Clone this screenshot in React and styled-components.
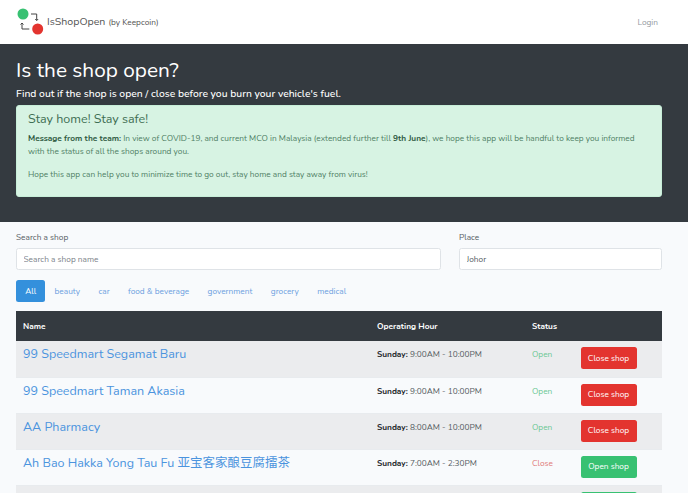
import React from 'react';
import styled, { createGlobalStyle } from 'styled-components';

const Global = createGlobalStyle`
  html, body { margin: 0; padding: 0; height: 493px; overflow: hidden; }
  body {
    background: #f8fafc;
    font-family: "Nunito", "Lato", "Noto Sans CJK SC", sans-serif;
    color: #212529;
  }
  * { box-sizing: border-box; }
`;

const Nav = styled.nav`
  height: 44px;
  background: #fff;
  display: flex;
  align-items: center;
  justify-content: space-between;
  padding: 0 30px 0 17px;
`;
const Brand = styled.div`
  display: flex;
  align-items: center;
  gap: 2px;
`;
const BrandText = styled.span`
  display: flex;
  align-items: baseline;
  gap: 3px;
  padding-bottom: 2px;
  color: #555;
  font-size: 10.6px;
  & small { font-size: 8.3px; }
`;
const Login = styled.a`
  font-size: 8.3px;
  color: #949aa1;
`;
const Hero = styled.header`
  background: #343a40;
  height: 178px;
  padding: 13px 26px 0 16px;
  color: #fff;
`;
const Title = styled.h1`
  margin: 0;
  font-size: 20.8px;
  font-weight: 400;
  line-height: 26px;
`;
const Lead = styled.p`
  margin: 3px 0 3px;
  font-size: 10.35px;
  font-weight: 500;
  line-height: 16px;
`;
const Alert = styled.div`
  background: #d7f3e3;
  border: 1px solid #c7eed8;
  border-radius: 3px;
  height: 92px;
  padding: 5px 11px;
  color: #4f7f65;
  font-size: 8.3px;
  & h4 { margin: 0 0 5px; font-size: 12.5px; font-weight: 400; line-height: 16px; color: #3f6f54; }
  & p { margin: 0 0 9px; line-height: 13.4px; }
  & b { color: #2f5a42; }
`;
const Main = styled.main`
  padding: 10px 26px 0 16px;
`;
const Filters = styled.div`
  display: grid;
  grid-template-columns: 425px 203px;
  column-gap: 18px;
`;
const Field = styled.label`
  display: flex;
  flex-direction: column;
  gap: 5px;
  font-size: 8.3px;
  line-height: 11px;
  color: #555c63;
`;
const Input = styled.input`
  height: 22px;
  border: 1px solid #dfe3e7;
  border-radius: 2.5px;
  padding: 0 6.5px;
  font: inherit;
  font-size: 8.3px;
  color: #555c63;
  background: #fff;
  outline: none;
  &::placeholder { color: #7b8189; opacity: 1; }
`;
const Pills = styled.div`
  display: flex;
  margin-top: 10px;
  margin-bottom: 9px;
`;
const Pill = styled.a`
  height: 22px;
  display: flex;
  align-items: center;
  padding: 0 9.2px;
  font-size: 8.3px;
  border-radius: 2.5px;
  color: ${({ $active }) => ($active ? '#fff' : '#6c9fe0')};
  background: ${({ $active }) => ($active ? '#3490dc' : 'transparent')};
`;
const Table = styled.table`
  width: 646px;
  border-collapse: collapse;
  table-layout: fixed;
  font-size: 8.3px;
`;
const Head = styled.th`
  background: #343a40;
  color: #fff;
  height: 30px;
  padding: 0 7px;
  text-align: left;
  font-weight: 700;
  width: ${({ $w }) => $w}px;
`;
const Row = styled.tr`
  height: 36px;
  background: ${({ $odd }) => ($odd ? '#ebecee' : '#f8fafc')};
  border-bottom: 1px solid #e8ebee;
`;
const Cell = styled.td`
  padding: 7px 7px 0;
  vertical-align: top;
  line-height: 13px;
  color: #555c63;
  & b { color: #212529; }
`;
const NameCell = styled(Cell)`
  padding-top: 5px;
`;
const ShopLink = styled.a`
  font-size: 12.5px;
  line-height: 15px;
  color: #4b94de;
`;
const Status = styled.span`
  color: ${({ $open }) => ($open ? '#6cc894' : '#e07a7a')};
`;
const Action = styled.button`
  height: 22px;
  width: 56px;
  border: none;
  border-radius: 2.5px;
  margin-top: -1px;
  display: block;
  font: inherit;
  font-size: 8.3px;
  color: #fff;
  background: ${({ $open }) => ($open ? '#e3342f' : '#38c172')};
`;

function Logo() {
  return (
    <svg width="28" height="28" viewBox="0 0 28 28" fill="none">
      <circle cx="6" cy="6" r="5.5" fill="#38c172" />
      <circle cx="20.7" cy="21" r="5.5" fill="#e3342f" />
      <path d="M14 6h5.7v6.500M18.200 11L19.700 12.500L21.200 11M12.300 21H5v-6M3.500 16.500L5 15l1.500 1.500" stroke="#444" strokeWidth="1" />
    </svg>
  );
}

const shops = [
  { name: '99 Speedmart Segamat Baru', hours: '9:00AM - 10:00PM', open: true },
  { name: '99 Speedmart Taman Akasia', hours: '9:00AM - 10:00PM', open: true },
  { name: 'AA Pharmacy', hours: '8:00AM - 10:00PM', open: true },
  { name: 'Ah Bao Hakka Yong Tau Fu 亚宝客家酿豆腐擂茶', hours: '7:00AM - 2:30PM', open: false },
];
const tags = ['All', 'beauty', 'car', 'food & beverage', 'government', 'grocery', 'medical'];

export default function App() {
  return (
    <>
      <Global />
      <Nav>
        <Brand>
          <Logo />
          <BrandText>IsShopOpen<small>(by Keepcoin)</small></BrandText>
        </Brand>
        <Login>Login</Login>
      </Nav>
      <Hero>
        <Title>Is the shop open?</Title>
        <Lead>Find out if the shop is open / close before you burn your vehicle's fuel.</Lead>
        <Alert>
          <h4>Stay home! Stay safe!</h4>
          <p><b>Message from the team:</b> In view of COVID-19, and current MCO in Malaysia (extended further till <b>9th June</b>), we hope this app will be handful to keep you informed with the status of all the shops around you.</p>
          <p>Hope this app can help you to minimize time to go out, stay home and stay away from virus!</p>
        </Alert>
      </Hero>
      <Main>
        <Filters>
          <Field>Search a shop<Input placeholder="Search a shop name" /></Field>
          <Field>Place<Input defaultValue="Johor" /></Field>
        </Filters>
        <Pills>
          {tags.map((t) => <Pill key={t} $active={t === 'All'}>{t}</Pill>)}
        </Pills>
        <Table>
          <thead>
            <tr>
              <Head $w={354}>Name</Head>
              <Head $w={155}>Operating Hour</Head>
              <Head $w={48.5}>Status</Head>
              <Head $w={88.5}></Head>
            </tr>
          </thead>
          <tbody>
            {shops.map((s, i) => (
              <Row key={s.name} $odd={i % 2 === 0}>
                <NameCell><ShopLink>{s.name}</ShopLink></NameCell>
                <Cell><b>Sunday:</b> {s.hours}</Cell>
                <Cell><Status $open={s.open}>{s.open ? 'Open' : 'Close'}</Status></Cell>
                <Cell><Action $open={s.open}>{s.open ? 'Close shop' : 'Open shop'}</Action></Cell>
              </Row>
            ))}
            <Row $odd>
              <NameCell />
              <Cell />
              <Cell />
              <Cell><Action>Open shop</Action></Cell>
            </Row>
          </tbody>
        </Table>
      </Main>
    </>
  );
}
